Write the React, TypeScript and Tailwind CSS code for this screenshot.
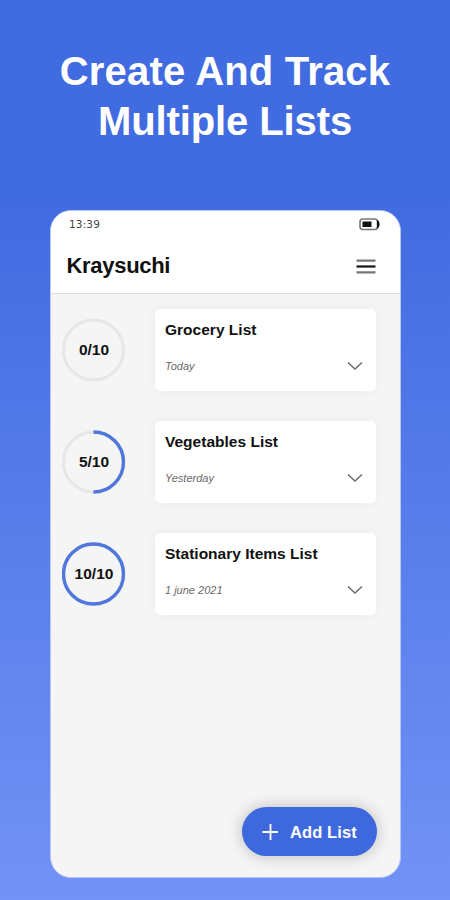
type ListItem = { title: string; date: string; done: number };

const lists: ListItem[] = [
  { title: 'Grocery List', date: 'Today', done: 0 },
  { title: 'Vegetables List', date: 'Yesterday', done: 5 },
  { title: 'Stationary Items List', date: '1 june 2021', done: 10 },
];

function ProgressRing({ done }: { done: number }) {
  const length = 2 * Math.PI * 30;
  return (
    <div className="grid h-16 w-16 place-items-center">
      <svg viewBox="0 0 64 64" className="col-start-1 row-start-1 h-16 w-16 -rotate-90" fill="none">
        <circle cx="32" cy="31.5" r="30" stroke="#e7e7e7" strokeWidth="3.2" />
        {done > 0 && (
          <circle cx="32" cy="31.5" r="30" stroke="#5078dc" strokeWidth="3.4" strokeDasharray={`${(length * done) / 10} ${length}`} />
        )}
      </svg>
      <span className="col-start-1 row-start-1 text-[15.5px] leading-4 font-bold text-[#111]">{done}/10</span>
    </div>
  );
}

function ListRow({ item }: { item: ListItem }) {
  return (
    <div className="flex h-[82px] items-center">
      <ProgressRing done={item.done} />
      <div className="ml-[29px] flex h-full w-[221px] flex-col rounded-[5px] bg-white pt-[11px] pr-[13px] pl-[10px] shadow-[0_0_14px_rgba(0,0,0,0.045)]">
        <h2 className="text-[15.5px] leading-5 font-bold tracking-[0.01px] whitespace-nowrap text-[#111]">{item.title}</h2>
        <div className="mt-[18px] flex h-4 items-center justify-between">
          <span className="text-[11px] leading-4 text-[#686868] italic">{item.date}</span>
          <svg viewBox="0 0 16 10" className="h-2.5 w-4" fill="none" stroke="#666" strokeWidth="1.3">
            <path d="M1 1.5 L8 8 L15 1.5" />
          </svg>
        </div>
      </div>
    </div>
  );
}

export default function App() {
  return (
    <main className="flex h-[900px] w-[450px] flex-col bg-linear-to-b from-[#416be1] from-22% to-[#7292f5] font-['Liberation_Sans',Arial,sans-serif]">
      <h1 className="mt-[46px] text-center text-[40px] leading-[50px] font-bold text-white">
        <span className="tracking-[0.18px]">Create And Track</span>
        <br />
        <span className="tracking-[-0.1px]">Multiple Lists</span>
      </h1>

      <section className="mt-16 ml-[50px] flex h-[668px] w-[351px] flex-col overflow-hidden rounded-[21px] border border-[#b6c6fa] bg-[#f5f5f5]">
        <header className="h-[83px] shrink-0 border-b border-[#dedede] bg-white">
          <div className="flex h-7 items-center justify-between pr-5 pl-[18px]">
            <span className="font-['DejaVu_Sans',sans-serif] text-[10.5px] tracking-[0.15px] text-[#444]">13:39</span>
            <svg viewBox="0 0 21 13" className="-mt-px h-[13px] w-[21px]">
              <rect x="1" y="1" width="17.5" height="10.5" rx="2.8" fill="white" stroke="#777" strokeWidth="1.6" />
              <rect x="3.5" y="3.5" width="9" height="5.5" fill="#111" />
              <path d="M18 2 Q20.5 2.8 20.5 6.3 T18 10.6Z" fill="#111" />
            </svg>
          </div>
          <div className="flex h-[54px] items-center justify-between pr-6 pl-[15.5px]">
            <span className="text-[22px] leading-7 font-bold tracking-[-0.3px] text-[#111]">Kraysuchi</span>
            <svg viewBox="0 0 20 16" className="mt-0.5 h-4 w-5" fill="none">
              <path d="M.5 1.6 H19.5 M.5 13.4 H19.5" stroke="#777" strokeWidth="2.4" />
              <path d="M.5 7.5 H19.5" stroke="#111" strokeWidth="2.2" />
            </svg>
          </div>
        </header>

        <div className="mt-[15px] ml-[11px] flex flex-col gap-[30px]">
          {lists.map((item) => (
            <ListRow key={item.title} item={item} />
          ))}
        </div>

        <button className="mt-auto mr-[23px] mb-[21px] flex h-[49px] w-[135px] shrink-0 items-center self-end rounded-full bg-[#3e68dd] pl-5 text-white shadow-[0_0_16px_rgba(0,0,0,0.24)]">
          <svg viewBox="0 0 16 16" className="h-4 w-4" fill="none" stroke="white" strokeWidth="1.8">
            <path d="M8.5 0 V16 M.5 8 H16.5" />
          </svg>
          <span className="ml-3 text-[16.5px] leading-5 font-bold tracking-[0.1px] whitespace-nowrap">Add List</span>
        </button>
      </section>
    </main>
  );
}
